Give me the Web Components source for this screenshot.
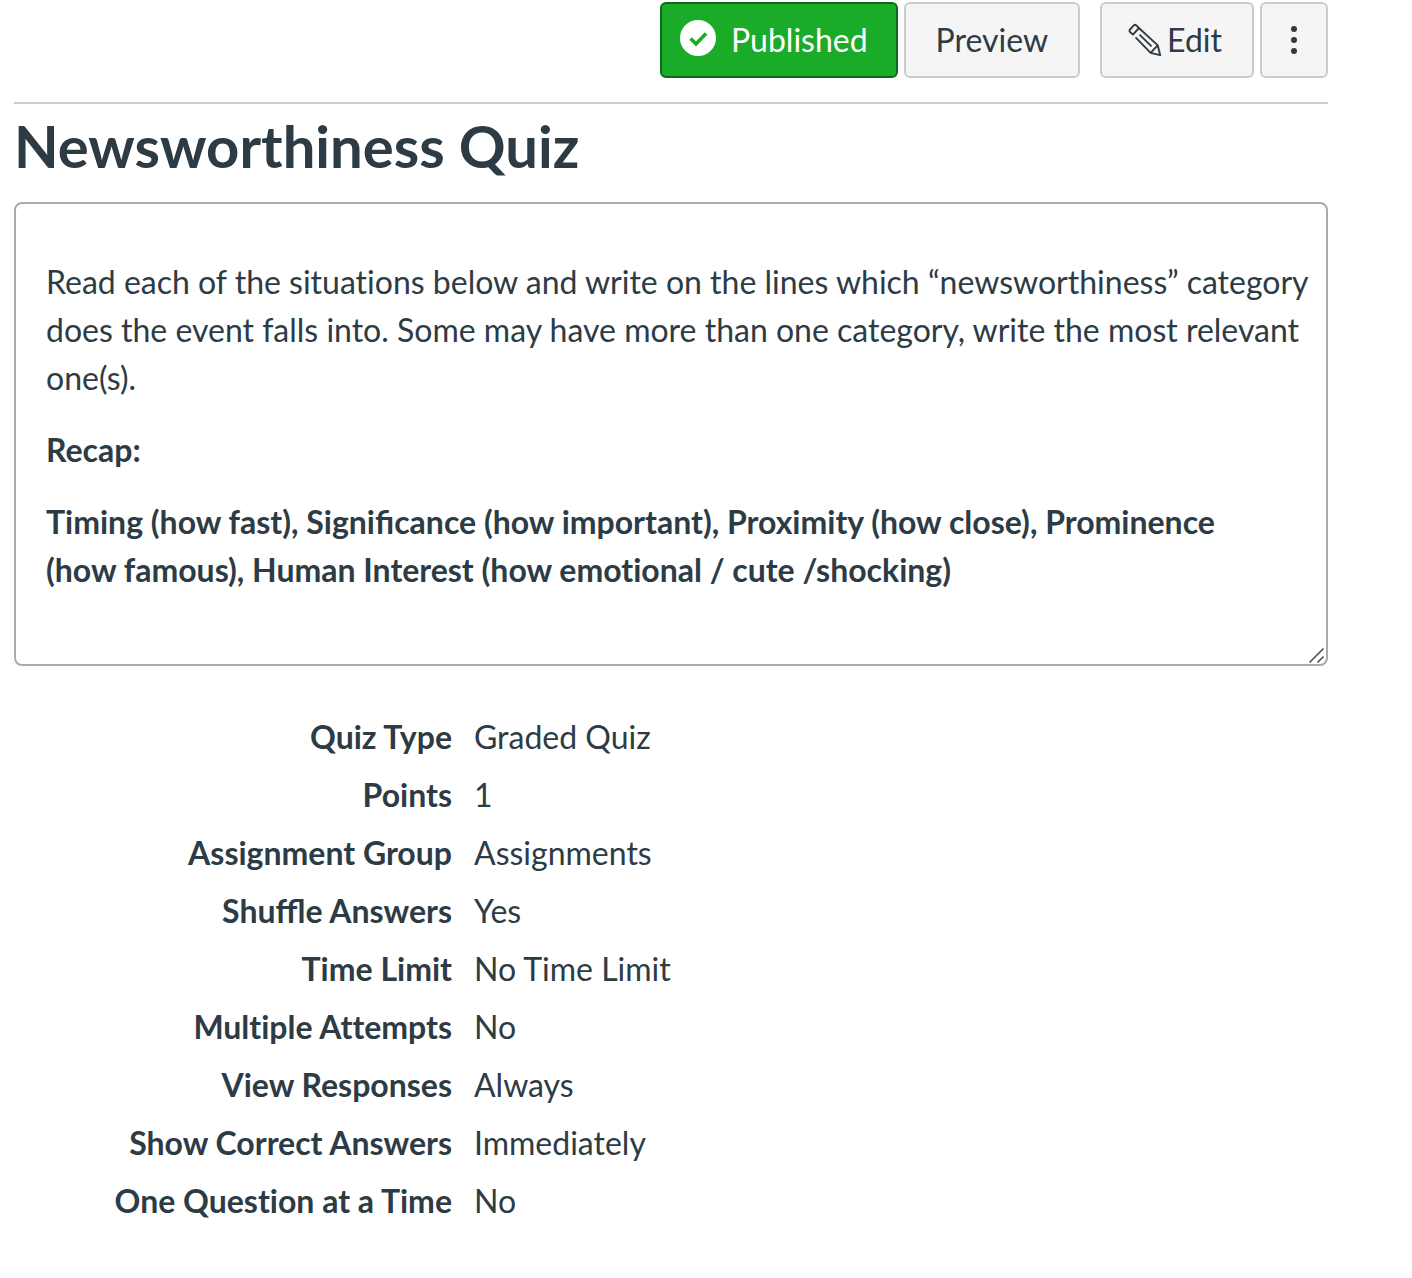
<!DOCTYPE html>
<html lang="en">
<head>
<meta charset="utf-8">
<title>Newsworthiness Quiz</title>
<style>
  body { margin: 0; background: #fff; color: #2d3b45; font: 32px/48px Lato, "Liberation Sans", sans-serif; font-variant-ligatures: no-common-ligatures; }
  .ligatures { font-variant-ligatures: normal; }
</style>
</head>
<body>
<quiz-page>
  <quiz-toolbar slot="toolbar">
    <tool-button variant="published">
      <svg slot="icon" width="36" height="36" viewBox="0 0 36 36" aria-hidden="true"><circle cx="18" cy="18" r="18" fill="#fff"/><path d="M10.6 18.6 16 24 26 13.4" fill="none" stroke="#1aab29" stroke-width="3.6"/></svg>
      Published</tool-button>
    <tool-button>Preview</tool-button>
    <tool-button variant="edit">
      <svg slot="icon" width="34" height="34" viewBox="0 0 34 34" fill="none" stroke="#2d3b45" stroke-width="1.9" stroke-linejoin="round" aria-hidden="true"><path d="M2 9Q1 7.7 2 6.5L5.8 2.4Q7 1.3 8.3 2.4L10.9 5 5 11.6Z"/><path d="M10.9 5 29.8 22.4 32.2 32.2 22.6 29.8 7.6 14.4M22.6 29.8 25 27.4 26 26.2 29.8 22.4M11.5 11.6 23.6 23.4"/></svg>
      Edit</tool-button>
    <tool-button variant="more" label="More options">
      <svg slot="icon" width="8" height="30" viewBox="0 0 8 30" fill="#2d3b45" aria-hidden="true"><circle cx="4" cy="4" r="3"/><circle cx="4" cy="15" r="3"/><circle cx="4" cy="26" r="3"/></svg>
    </tool-button>
  </quiz-toolbar>
  <span slot="title">Newsworthiness Quiz</span>
  <quiz-description slot="description">
    <p>Read each of the situations below and write on the lines which “newsworthiness” category<br>does the event falls into. Some may have more than one category, write the most relevant<br>one(s).</p>
    <p><strong>Recap:</strong></p>
    <p><strong>Timing (how fast), <span class="ligatures">Significance</span> (how important), Proximity (how close), Prominence<br>(how famous), Human Interest (how emotional / cute /shocking)</strong></p>
  </quiz-description>
  <quiz-details slot="details"></quiz-details>
</quiz-page>

<script>
class BaseElement extends HTMLElement {
  render(html) {
    const template = document.createElement('template');
    template.innerHTML = html;
    this.attachShadow({ mode: 'open' }).append(template.content.cloneNode(true));
  }
}

customElements.define('quiz-page', class extends BaseElement {
  constructor() {
    super();
    this.render(`<style>
      :host { display: block; padding: 2px 84px 48px 14px; }
      h1 { margin: 6px 0 20px; font-size: 58px; line-height: 72px; font-weight: 700; }
    </style>
    <main>
      <slot name="toolbar"></slot>
      <h1><slot name="title"></slot></h1>
      <slot name="description"></slot>
      <slot name="details"></slot>
    </main>`);
  }
});

customElements.define('quiz-toolbar', class extends BaseElement {
  constructor() {
    super();
    this.render(`<style>
      :host { display: flex; justify-content: flex-end; gap: 6px; padding-bottom: 24px; border-bottom: 2px solid #c7cdd1; }
      ::slotted([variant="edit"]) { margin-left: 14px; }
    </style><slot></slot>`);
  }
});

customElements.define('tool-button', class extends BaseElement {
  constructor() {
    super();
    this.render(`<style>
      :host { display: block; }
      button { display: flex; align-items: center; box-sizing: border-box; height: 76px; padding: 0 30px; border: 2px solid #c7cdd1; border-radius: 6px; background: #f5f5f5; color: #2d3b45; font: inherit; cursor: pointer; }
      :host([variant="published"]) button { gap: 15px; padding: 0 28px 0 18px; background: #1aab29; border-color: #0b6b1a; color: #fff; }
      :host([variant="published"]) ::slotted(svg) { margin-bottom: 4px; }
      :host([variant="edit"]) button { gap: 5px; padding: 0 30px 0 26px; }
      :host([variant="more"]) button { padding: 0 28px; }
      ::slotted(svg) { flex: none; }
    </style><button type="button"><slot name="icon"></slot><span><slot></slot></span></button>`);
  }
  connectedCallback() {
    const label = this.getAttribute('label');
    if (label) this.shadowRoot.querySelector('button').setAttribute('aria-label', label);
  }
});

customElements.define('quiz-description', class extends BaseElement {
  constructor() {
    super();
    this.render(`<style>
      :host { display: block; position: relative; padding: 54px 8px 70px 30px; border: 2px solid #aaa; border-radius: 8px; }
      ::slotted(p) { margin: 0 0 24px; }
      ::slotted(p:last-of-type) { margin-bottom: 0; }
      svg { position: absolute; right: 0; bottom: 0; }
    </style>
    <slot></slot>
    <svg width="18" height="18" viewBox="0 0 18 18" fill="none" stroke="#555" stroke-width="1.7" aria-hidden="true"><path d="M1.5 16.5 15.5 2.5M9.5 16.5 15.5 10.5"/></svg>`);
  }
});

customElements.define('quiz-details', class extends BaseElement {
  constructor() {
    super();
    const rows = [
      ['Quiz Type', 'Graded Quiz'],
      ['Points', '1'],
      ['Assignment Group', 'Assignments'],
      ['<span class="ligatures">Shuffle</span> Answers', 'Yes'],
      ['Time Limit', 'No Time Limit'],
      ['Multiple Attempts', 'No'],
      ['View Responses', 'Always'],
      ['Show Correct Answers', 'Immediately'],
      ['One Question at a Time', 'No']
    ];
    this.render(`<style>
      :host { display: block; margin-top: 42px; }
      table { width: 100%; border-collapse: collapse; table-layout: fixed; }
      th { width: 33.333%; padding: 5px 0; text-align: right; font-weight: 700; }
      td { padding: 5px 0 5px 22px; }
      .ligatures { font-variant-ligatures: normal; }
    </style>
    <table><tbody>${rows.map(([name, value]) => `<tr><th scope="row">${name}</th><td>${value}</td></tr>`).join('')}</tbody></table>`);
  }
});
</script>
</body>
</html>
